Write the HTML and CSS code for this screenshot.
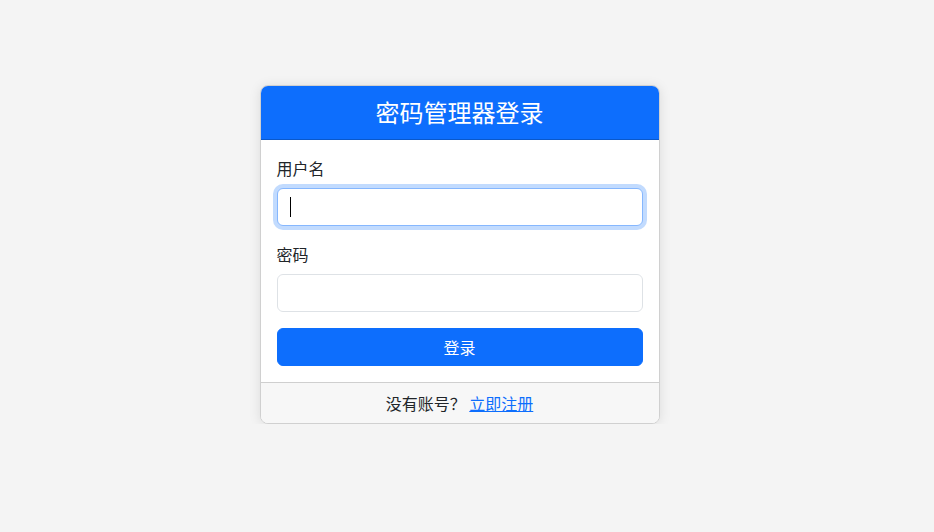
FILE: index.html
```html
<!DOCTYPE html>
<html lang="zh-CN">
<head>
  <meta charset="UTF-8" />
  <meta name="viewport" content="width=device-width, initial-scale=1" />
  <title>密码管理器登录</title>
  <link rel="stylesheet" href="styles.css">
</head>
<body>
  <div class="page">
    <div class="login-card">
      <div class="card-header">密码管理器登录</div>
      <form class="card-body" onsubmit="return false;">
        <div class="field">
          <label for="username">用户名</label>
          <div class="input-wrap">
            <input type="text" id="username" class="form-control focused" autofocus />
            <span class="caret"></span>
          </div>
        </div>
        <div class="field">
          <label for="password">密码</label>
          <input type="password" id="password" class="form-control" />
        </div>
        <button type="submit" class="btn-login">登录</button>
      </form>
      <div class="card-footer">
        没有账号？&nbsp;<a href="#">立即注册</a>
      </div>
    </div>
  </div>
</body>
</html>
```

FILE: styles.css
```css
* {
  box-sizing: border-box;
}
body {
  margin: 0;
  font-family: "Noto Sans CJK SC", "Noto Sans", sans-serif;
  font-size: 16px;
  line-height: 1.5;
  background-color: #f4f4f4;
  color: #212529;
}
.page {
  display: flex;
  justify-content: center;
  padding: 85px 15px 0 0;
}
.login-card {
  width: 400px;
  background: #fff;
  border: 1px solid #d0d0d0;
  border-radius: 8px;
  overflow: hidden;
  box-shadow: 0 1px 12px rgba(0, 0, 0, 0.1);
}
.card-header {
  background-color: #0d6efd;
  color: #fff;
  text-align: center;
  font-size: 24px;
  line-height: 36px;
  padding: 8px 16px 9px;
  border-bottom: 1px solid #0a58ca;
}
.card-body {
  margin: 0;
  padding: 16px;
}
.field {
  margin-bottom: 16px;
}
.field label {
  display: block;
  margin-bottom: 8px;
}
.input-wrap {
  position: relative;
}
/* text cursor shown in the focused field */
.caret {
  position: absolute;
  left: 13px;
  top: 9px;
  width: 1px;
  height: 20px;
  background: #000;
}
.form-control {
  display: block;
  width: 100%;
  height: 38px;
  padding: 6px 12px;
  font: inherit;
  color: #212529;
  background: #fff;
  border: 1px solid #dee2e6;
  border-radius: 6px;
  outline: none;
  caret-color: transparent;
}
.form-control.focused,
.form-control:focus {
  border-color: #86b7fe;
  box-shadow: 0 0 0 4px rgba(13, 110, 253, 0.25);
}
.btn-login {
  display: block;
  width: 100%;
  height: 38px;
  font: inherit;
  color: #fff;
  background-color: #0d6efd;
  border: 1px solid #0d6efd;
  border-radius: 6px;
  cursor: pointer;
}
.card-footer {
  background-color: #f7f7f7;
  border-top: 1px solid #cfcfcf;
  text-align: center;
  padding: 8px 16px;
}
.card-footer a {
  color: #0d6efd;
  text-decoration: underline;
}
```
